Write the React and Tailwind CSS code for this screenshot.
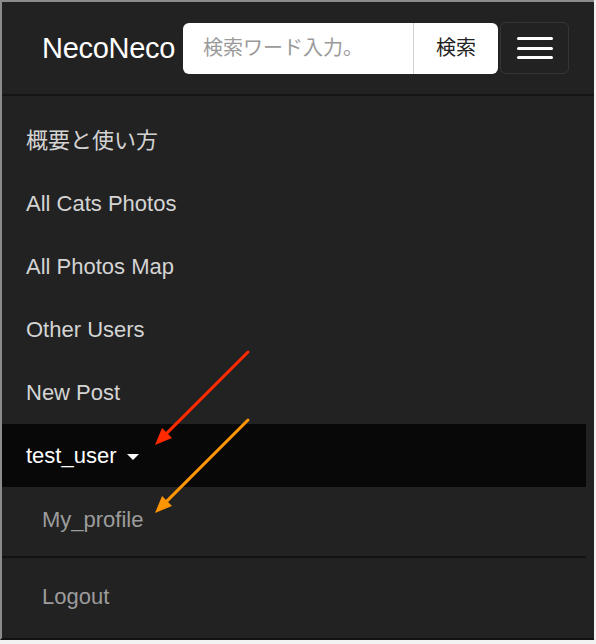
const menuItems = ["概要と使い方", "All Cats Photos", "All Photos Map", "Other Users", "New Post"];

function Arrow({ x1, y1, x2, y2, color }) {
  const dx = x2 - x1;
  const dy = y2 - y1;
  const len = Math.sqrt(dx * dx + dy * dy);
  const ux = dx / len;
  const uy = dy / len;
  const head = 17;
  const half = 7;
  const bx = x2 - ux * head;
  const by = y2 - uy * head;
  const p1 = `${bx - uy * half},${by + ux * half}`;
  const p2 = `${bx + uy * half},${by - ux * half}`;
  return (
    <g>
      <line x1={x1} y1={y1} x2={bx + ux * 2} y2={by + uy * 2} stroke={color} strokeWidth="3" strokeLinecap="round" />
      <polygon points={`${x2},${y2} ${p1} ${p2}`} fill={color} />
    </g>
  );
}

export default function App() {
  return (
    <div className="relative w-[596px] h-[644px] bg-[#f2f2f2] font-['Liberation_Sans','Noto_Sans_CJK_JP',sans-serif]">
      <div className="h-[640px] w-[594px] bg-[#222] border-l-2 border-t-2 border-[#8c8c8c] border-b-2 border-b-[#111] flex flex-col">
        {/* Navbar */}
        <div className="h-[94px] flex items-center pl-[40px] border-b-2 border-[#151515] shrink-0">
          <span className="text-[29px] text-white tracking-[-0.3px] mr-[8px] leading-none">NecoNeco</span>
          <div className="flex h-[51px]">
            <div className="w-[231px] bg-white rounded-l-[6px] flex items-center pl-[20px] text-[20px] text-[#9a9a9a] border-r border-[#cfcfcf]">
              検索ワード入力。
            </div>
            <div className="w-[84px] bg-white rounded-r-[6px] flex items-center justify-center text-[20px] text-[#222]">
              検索
            </div>
          </div>
          <button className="ml-[2px] w-[69px] h-[52px] rounded-[6px] border border-[#353535] flex flex-col items-center justify-center gap-[6.5px]">
            <span className="block w-[36px] h-[3px] bg-white rounded-full" />
            <span className="block w-[36px] h-[3px] bg-white rounded-full" />
            <span className="block w-[36px] h-[3px] bg-white rounded-full" />
          </button>
        </div>

        {/* Collapse menu */}
        <div className="w-[584px] pt-[13px] flex flex-col">
          {menuItems.map((item) => (
            <div key={item} className="h-[63px] flex items-center pl-[24px] text-[22px] text-[#d4d4d4]">
              {item}
            </div>
          ))}
          <div className="h-[63px] flex items-center pl-[24px] text-[22px] text-white bg-[#080808]">
            test_user
            <svg width="12" height="6" viewBox="0 0 12 6" className="ml-[10px] mt-[3px]">
              <polygon points="0,0 12,0 6,6" fill="white" />
            </svg>
          </div>
          <div className="h-[64px] flex items-center pl-[40px] text-[22px] text-[#9c9c9c]">
            My_profile
          </div>
          <div className="h-[5px]" />
          <div className="h-[2px] bg-[#121212]" />
          <div className="h-[76px] flex items-center pl-[40px] text-[22px] text-[#9c9c9c]">
            Logout
          </div>
        </div>
      </div>

      {/* annotation arrows */}
      <svg className="absolute inset-0 pointer-events-none" width="596" height="644">
        <Arrow x1={248} y1={352} x2={155} y2={445} color="#ff2a00" />
        <Arrow x1={248} y1={420} x2={155} y2={513} color="#ff9500" />
      </svg>
    </div>
  );
}
